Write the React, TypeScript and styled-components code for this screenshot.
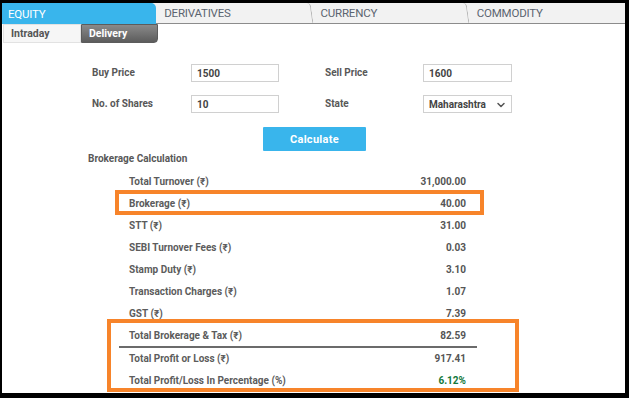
import React from "react";
import styled, { createGlobalStyle } from "styled-components";
import { ChevronDown } from "lucide-react";

const ORANGE = "#f7842a";
const BLUE = "#39b5ec";

const tabs = ["EQUITY", "DERIVATIVES", "CURRENCY", "COMMODITY"];

const charges = [
  { label: "Total Turnover (₹)", value: "31,000.00" },
  { label: "Brokerage (₹)", value: "40.00", boxed: true },
  { label: "STT (₹)", value: "31.00" },
  { label: "SEBI Turnover Fees (₹)", value: "0.03" },
  { label: "Stamp Duty (₹)", value: "3.10" },
  { label: "Transaction Charges (₹)", value: "1.07" },
  { label: "GST (₹)", value: "7.39" },
];

export default function App() {
  return (
    <Frame>
      <GlobalStyle />
      <Window>
        <TabBar>
          {tabs.map((t, i) => (
            <Tab key={t} $active={i === 0}>
              {t}
            </Tab>
          ))}
        </TabBar>
        <SubTabs>
          <SubTab>Intraday</SubTab>
          <SubTab $active>Delivery</SubTab>
        </SubTabs>

        <FormGrid>
          <FieldLabel>Buy Price</FieldLabel>
          <TextInput defaultValue="1500" />
          <span />
          <FieldLabel>Sell Price</FieldLabel>
          <TextInput defaultValue="1600" />

          <FieldLabel>No. of Shares</FieldLabel>
          <TextInput defaultValue="10" />
          <span />
          <FieldLabel>State</FieldLabel>
          <SelectBox>
            <span>Maharashtra</span>
            <ChevronDown size={12} strokeWidth={3} />
          </SelectBox>
        </FormGrid>

        <ButtonRow>
          <CalcButton>Calculate</CalcButton>
        </ButtonRow>

        <SectionTitle>Brokerage Calculation</SectionTitle>

        <ResultList>
          {charges.map((c) => (
            <Row key={c.label} $boxed={c.boxed}>
              <RowLabel>{c.label}</RowLabel>
              <RowValue>{c.value}</RowValue>
            </Row>
          ))}
          <TotalsGroup>
            <Row $divider>
              <RowLabel>Total Brokerage &amp; Tax (₹)</RowLabel>
              <RowValue>82.59</RowValue>
            </Row>
            <Row>
              <RowLabel>Total Profit or Loss (₹)</RowLabel>
              <RowValue>917.41</RowValue>
            </Row>
            <Row>
              <RowLabel>Total Profit/Loss In Percentage (%)</RowLabel>
              <RowValue $positive>6.12%</RowValue>
            </Row>
          </TotalsGroup>
        </ResultList>
      </Window>
    </Frame>
  );
}

const GlobalStyle = createGlobalStyle`
  html, body {
    margin: 0;
    padding: 0;
    background: #000;
  }
  body {
    font-family: Roboto, "Liberation Sans", sans-serif;
  }
`;

const Frame = styled.div`
  box-sizing: border-box;
  width: 629px;
  height: 398px;
  padding: 3px 4px 5px 2px;
  background: #000;
  overflow: hidden;
`;

const Window = styled.div`
  height: 100%;
  background: #fff;
  display: flex;
  flex-direction: column;
  color: #5a5a5a;
`;

const TabBar = styled.div`
  display: flex;
  height: 21px;
  background: #f2f2f2;
  border-bottom: 1px solid #8c8c8c;
  box-sizing: border-box;
`;

const Tab = styled.div<{ $active?: boolean }>`
  flex: 1;
  position: relative;
  display: flex;
  align-items: center;
  padding-left: ${(p) => (p.$active ? "6px" : "8px")};
  font-size: 11.5px;
  letter-spacing: -0.2px;
  color: ${(p) => (p.$active ? "#fff" : "#5b6470")};
  background: ${(p) => (p.$active ? BLUE : "transparent")};
  border-top-right-radius: ${(p) => (p.$active ? "5px" : "0")};
  margin-bottom: ${(p) => (p.$active ? "-1px" : "0")};

  &::after {
    content: "";
    position: absolute;
    right: 1px;
    top: 0;
    bottom: 0;
    width: 3px;
    border-right: 1px solid ${(p) => (p.$active ? BLUE : "#b4b4b4")};
    border-top-right-radius: 4px;
    transform: skewX(8deg);
    background: ${(p) => (p.$active ? BLUE : "transparent")};
  }

  &:last-child::after {
    display: none;
  }
`;

const SubTabs = styled.div`
  display: flex;
  height: 19px;
  margin-left: 1px;
`;

const SubTab = styled.div<{ $active?: boolean }>`
  width: ${(p) => (p.$active ? "77px" : "78px")};
  box-sizing: border-box;
  display: flex;
  align-items: center;
  padding-left: 7px;
  font-size: 10.5px;
  font-weight: 700;
  color: ${(p) => (p.$active ? "#fff" : "#555")};
  background: ${(p) =>
    p.$active ? "linear-gradient(#8a8a8a, #5c5c5c)" : "#f6f6f6"};
  border: 1px solid ${(p) => (p.$active ? "#5c5c5c" : "#e2e2e2")};
  border-bottom-right-radius: ${(p) => (p.$active ? "4px" : "0")};
`;

const FormGrid = styled.div`
  display: grid;
  grid-template-columns: 99px 88px 46px 98px 89px;
  grid-auto-rows: 18px;
  row-gap: 13px;
  align-items: center;
  margin: 21px 0 0 90px;
`;

const FieldLabel = styled.span`
  font-size: 10px;
  font-weight: 700;
  color: #585858;
  padding-bottom: 2px;
`;

const TextInput = styled.input`
  box-sizing: border-box;
  height: 18px;
  width: 100%;
  border: 1px solid #d0d0d0;
  padding: 1px 0 0 5px;
  font-family: Roboto, "Liberation Sans", sans-serif;
  font-size: 10px;
  font-weight: 700;
  color: #444;
  outline: none;
`;

const SelectBox = styled.div`
  box-sizing: border-box;
  height: 18px;
  border: 1px solid #d0d0d0;
  display: flex;
  align-items: center;
  justify-content: space-between;
  padding: 1px 4px 0 5px;
  font-size: 10px;
  font-weight: 700;
  color: #444;

  svg {
    color: #555;
  }
`;

const ButtonRow = styled.div`
  display: flex;
  justify-content: center;
  margin-top: 14px;
  padding-left: 2px;
`;

const CalcButton = styled.button`
  width: 103px;
  height: 24px;
  border: none;
  border-radius: 1px;
  background: ${BLUE};
  color: #fff;
  font-family: Roboto, "Liberation Sans", sans-serif;
  font-size: 11px;
  font-weight: 700;
  letter-spacing: 0.3px;
`;

const SectionTitle = styled.div`
  margin: 1px 0 4px 86px;
  height: 14px;
  line-height: 14px;
  font-size: 10px;
  font-weight: 700;
  color: #585858;
`;

const ResultList = styled.div`
  width: 358px;
  margin-left: 117px;
  display: flex;
  flex-direction: column;
`;

const Row = styled.div<{ $boxed?: boolean; $divider?: boolean }>`
  position: relative;
  height: 22px;
  display: flex;
  align-items: center;
  justify-content: space-between;
  padding: 0 11px 0 10px;
  border-bottom: ${(p) => (p.$divider ? "2px solid #6b6b6b" : "none")};
  margin-bottom: ${(p) => (p.$divider ? "-1px" : "0")};

  &::after {
    content: "";
    display: ${(p) => (p.$boxed ? "block" : "none")};
    position: absolute;
    left: -4px;
    right: -7px;
    top: -2px;
    bottom: -1px;
    border: 4px solid ${ORANGE};
  }
`;

const TotalsGroup = styled.div`
  position: relative;

  &::after {
    content: "";
    position: absolute;
    left: -12px;
    right: -42px;
    top: -5px;
    bottom: -1px;
    border: 4px solid ${ORANGE};
    pointer-events: none;
  }
`;

const RowLabel = styled.span`
  font-size: 10px;
  font-weight: 700;
  color: #5c5c5c;
`;

const RowValue = styled.span<{ $positive?: boolean }>`
  font-size: 10px;
  font-weight: 700;
  color: ${(p) => (p.$positive ? "#13793c" : "#555")};
`;
